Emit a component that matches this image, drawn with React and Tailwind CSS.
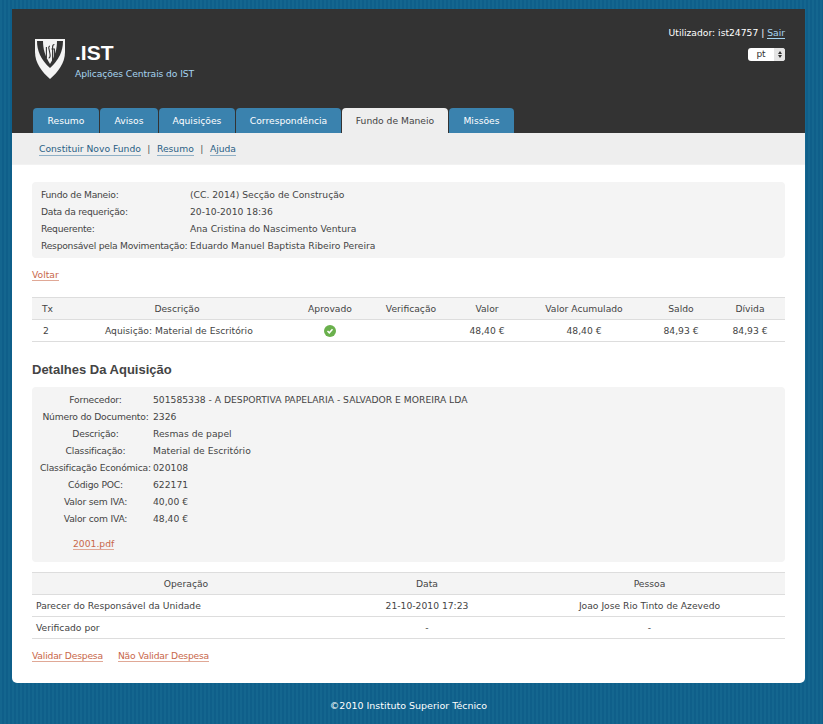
import React from 'react';

const font = "font-['DejaVu_Sans',sans-serif]";
const rowCell = "py-0 px-1 font-normal";

const Link = ({ children }) => (
  <a className="text-[#c8674a] border-b border-[#e0a896] leading-[11px] inline-block">{children}</a>
);

const NavLink = ({ children }) => (
  <a className="text-[#2a5f85] border-b border-[#8fb0c6] leading-[12px] inline-block">{children}</a>
);

const Logo = () => (
  <svg width="32" height="42" viewBox="0 0 32 42">
    <path d="M1 1 H31 V14 C31 25 24 34 16 41 C8 34 1 25 1 14 Z" fill="#f4f4f4" />
    <path d="M3 3 H29 C29 13 25 22 16 30 C7 22 3 13 3 3 Z" fill="#333333" />
    <path d="M9 3 H23 C23 11 21 18 16 26 C11 18 9 11 9 3 Z" fill="#f4f4f4" />
    <g stroke="#333333" strokeWidth="1.1" fill="none">
      <path d="M12.4 9 V20" />
      <path d="M16 8 C14.6 8 14.6 10 15 11 L16 16 C16.4 18 16 20 14.6 20" />
      <path d="M20.4 6.5 C19 6.5 18.6 7.5 18.6 9 V23" />
      <path d="M17.4 11 H20.4 V20" />
    </g>
  </svg>
);

const tabs = ['Resumo', 'Avisos', 'Aquisições', 'Correspondência', 'Fundo de Maneio', 'Missões'];
const tabWidths = ['w-[66px]', 'w-[58px]', 'w-[76px]', 'w-[105px]', 'w-[106px]', 'w-[65px]'];

const topInfo = [
  ['Fundo de Maneio:', '(CC. 2014) Secção de Construção'],
  ['Data da requerição:', '20-10-2010 18:36'],
  ['Requerente:', 'Ana Cristina do Nascimento Ventura'],
  ['Responsável pela Movimentação:', 'Eduardo Manuel Baptista Ribeiro Pereira'],
];

const details = [
  ['Fornecedor:', '501585338 - A DESPORTIVA PAPELARIA - SALVADOR E MOREIRA LDA'],
  ['Número do Documento:', '2326'],
  ['Descrição:', 'Resmas de papel'],
  ['Classificação:', 'Material de Escritório'],
  ['Classificação Económica:', '020108'],
  ['Código POC:', '622171'],
  ['Valor sem IVA:', '40,00 €'],
  ['Valor com IVA:', '48,40 €'],
];

const App = () => {
  return (
    <div className={`${font} min-h-[724px] text-[9.2px] text-[#444] bg-[#13648f] bg-[repeating-linear-gradient(90deg,#14668f_0px,#14668f_2px,#0f5f8a_2px,#0f5f8a_4px)] pt-[9px]`}>
      <div className="w-[793px] ml-3 bg-white rounded-b-[5px] h-[674px]">
        {/* header */}
        <div className="bg-[#333333] h-[124px] flex flex-col justify-between">
          <div className="flex justify-between pl-[22px] pr-5">
            <div className="flex pt-[29px] gap-[9px]">
              <Logo />
              <div className="pt-[3px]">
                <div className="font-['Liberation_Sans',sans-serif] font-bold text-[21px] leading-[24px] text-white">.IST</div>
                <div className="text-[#a6d4f0] leading-[12px] mt-[3px] tracking-[-0.1px]">Aplicações Centrais do IST</div>
              </div>
            </div>
            <div className="pt-[18px] flex flex-col items-end">
              <div className="text-white leading-[12px]">
                Utilizador: ist24757 | <a className="text-[#a6d4f0] border-b border-[#a6d4f0]">Sair</a>
              </div>
              <div className="mt-[9px] w-[37px] h-[13px] bg-white rounded-[3px] flex items-center text-[#333] text-[9px] overflow-hidden">
                <span className="flex-1 text-center">pt</span>
                <span className="w-[11px] h-full bg-[#e4e4e4] flex flex-col items-center justify-center gap-[1px]">
                  <span className="w-0 h-0 border-x-[2px] border-x-transparent border-b-[3px] border-b-[#333]"></span>
                  <span className="w-0 h-0 border-x-[2px] border-x-transparent border-t-[3px] border-t-[#333]"></span>
                </span>
              </div>
            </div>
          </div>
          <div className="flex pl-[21px] gap-px">
            {tabs.map((t, i) => (
              <div
                key={t}
                className={`${tabWidths[i]} h-[25px] pt-[1px] rounded-t-[4px] flex items-center justify-center ${
                  t === 'Fundo de Maneio' ? 'bg-[#eeeeee] text-[#444]' : 'bg-[#3a82ae] text-white'
                }`}
              >
                {t}
              </div>
            ))}
          </div>
        </div>

        {/* sub nav */}
        <div className="bg-[#eeeeee] h-[32px] pt-[1px] pl-[27px] flex items-center gap-[6.5px] text-[#555] border-b border-[#f2f2f2]">
          <NavLink>Constituir Novo Fundo</NavLink>
          <span>|</span>
          <NavLink>Resumo</NavLink>
          <span>|</span>
          <NavLink>Ajuda</NavLink>
        </div>

        <div className="px-5 pt-[17px]">
          <div className="bg-[#f4f4f4] rounded-[4px] h-[76px] pt-[4px] pl-[9px]">
            {topInfo.map(([k, v]) => (
              <div key={k} className="flex h-[17px] items-center whitespace-nowrap">
                <div className="w-[149px] tracking-[-0.25px]">{k}</div>
                <div>{v}</div>
              </div>
            ))}
          </div>

          <div className="mt-[10px] h-[13px]">
            <Link>Voltar</Link>
          </div>

          <table className="w-full mt-[16px] border-collapse table-fixed text-center">
            <colgroup>
              <col className="w-[31px]" />
              <col className="w-[228px]" />
              <col className="w-[78px]" />
              <col className="w-[84px]" />
              <col className="w-[68px]" />
              <col className="w-[126px]" />
              <col className="w-[68px]" />
              <col />
            </colgroup>
            <thead>
              <tr className="bg-[#f4f4f4] border-y border-[#dddddd] h-[22px]">
                <th className="font-normal text-left pl-[10px] pt-[1px]">Tx</th>
                <th className={`${rowCell} pt-[1px]`}>Descrição</th>
                <th className={`${rowCell} pt-[1px]`}>Aprovado</th>
                <th className={`${rowCell} pt-[1px]`}>Verificação</th>
                <th className={`${rowCell} pt-[1px]`}>Valor</th>
                <th className={`${rowCell} pt-[1px]`}>Valor Acumulado</th>
                <th className={`${rowCell} pt-[1px]`}>Saldo</th>
                <th className={`${rowCell} pt-[1px]`}>Dívida</th>
              </tr>
            </thead>
            <tbody>
              <tr className="border-b border-[#dddddd] h-[22px]">
                <td className="text-left pl-[11px] pt-[1px]">2</td>
                <td className="text-left pl-[42px] whitespace-nowrap pt-[1px]">Aquisição: Material de Escritório</td>
                <td>
                  <span className="inline-flex align-middle w-[12px] h-[12px] rounded-full bg-[#6ab04c] items-center justify-center">
                    <svg width="8" height="8" viewBox="0 0 8 8" fill="none" stroke="#fff" strokeWidth="1.5">
                      <path d="M1.5 4 L3.3 5.8 L6.5 2.2" />
                    </svg>
                  </span>
                </td>
                <td></td>
                <td className="pt-[1px]">48,40 €</td>
                <td className="pt-[1px]">48,40 €</td>
                <td className="pt-[1px]">84,93 €</td>
                <td className="pt-[1px]">84,93 €</td>
              </tr>
            </tbody>
          </table>

          <h2 className="font-['Liberation_Sans',sans-serif] font-bold text-[13px] leading-[16px] text-[#444] mt-[20px]">
            Detalhes Da Aquisição
          </h2>

          <div className="bg-[#f4f4f4] rounded-[4px] h-[175px] mt-[9px] pt-[4px]">
            {details.map(([k, v]) => (
              <div key={k} className="flex h-[17px] items-center whitespace-nowrap">
                <div className="w-[121px] pl-[6px] flex justify-center shrink-0 tracking-[-0.2px]">{k}</div>
                <div>{v}</div>
              </div>
            ))}
            <div className="pl-[41px] mt-[10px]">
              <Link>2001.pdf</Link>
            </div>
          </div>

          <table className="w-full mt-[10px] border-collapse table-fixed text-center">
            <colgroup>
              <col className="w-[308px]" />
              <col className="w-[174px]" />
              <col />
            </colgroup>
            <thead>
              <tr className="bg-[#f4f4f4] border-y border-[#dddddd] h-[22px]">
                <th className={`${rowCell} pt-[1px]`}>Operação</th>
                <th className={`${rowCell} pt-[1px]`}>Data</th>
                <th className={`${rowCell} pt-[1px]`}>Pessoa</th>
              </tr>
            </thead>
            <tbody>
              <tr className="border-b border-[#dddddd] h-[22px]">
                <td className="text-left pl-1 pt-[1px]">Parecer do Responsável da Unidade</td>
                <td className="pt-[1px]">21-10-2010 17:23</td>
                <td className="pt-[1px]">Joao Jose Rio Tinto de Azevedo</td>
              </tr>
              <tr className="border-b border-[#dddddd] h-[22px]">
                <td className="text-left pl-1 pt-[1px]">Verificado por</td>
                <td className="pt-[1px]">-</td>
                <td className="pt-[1px]">-</td>
              </tr>
            </tbody>
          </table>

          <div className="mt-[11px] flex gap-[15px] tracking-[-0.2px]">
            <Link>Validar Despesa</Link>
            <Link>Não Validar Despesa</Link>
          </div>
        </div>
      </div>

      <div className="w-[793px] ml-3 text-center text-white text-[9.5px] mt-[17px] leading-[12px]">
        ©2010 Instituto Superior Técnico
      </div>
    </div>
  );
};

export default App;
